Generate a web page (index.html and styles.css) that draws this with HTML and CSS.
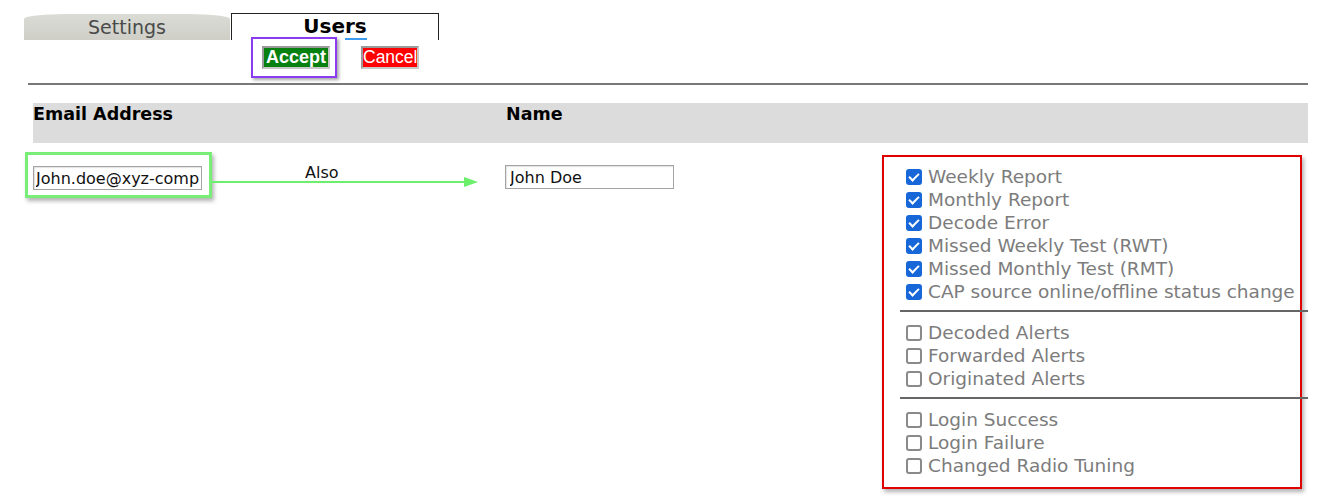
FILE: index.html
```html
<!DOCTYPE html>
<html lang="en">
<head>
<meta charset="utf-8">
<title>Users</title>
<link rel="stylesheet" href="styles.css">
</head>
<body>
<div class="tabs">
  <div class="tab tab-settings">Settings</div>
  <div class="tab tab-users">Use<span class="tab-mark">rs</span></div>
</div>
<div class="actions">
  <div class="accept-frame"><button class="btn btn-accept" type="button">Accept</button></div>
  <button class="btn btn-cancel" type="button">Cancel</button>
</div>
<div class="rule"></div>
<div class="head">
  <div class="head-email">Email Address</div>
  <div class="head-name">Name</div>
</div>
<div class="row">
  <div class="email-frame"><input class="field field-email" type="text" value="John.doe@xyz-comp"></div>
  <div class="link">
    <div class="link-label">Also</div>
    <svg class="link-arrow" width="266" height="10" viewBox="0 0 266 10">
      <line x1="0" y1="5" x2="256" y2="5" stroke="#6cf06c" stroke-width="2"/>
      <polygon points="252,0 266,5 252,10" fill="#6cf06c"/>
    </svg>
  </div>
  <input class="field field-name" type="text" value="John Doe">
  <div class="prefs">
    <label class="pref"><span class="box on"></span>Weekly Report</label>
    <label class="pref"><span class="box on"></span>Monthly Report</label>
    <label class="pref"><span class="box on"></span>Decode Error</label>
    <label class="pref"><span class="box on"></span>Missed Weekly Test (RWT)</label>
    <label class="pref"><span class="box on"></span>Missed Monthly Test (RMT)</label>
    <label class="pref"><span class="box on"></span>CAP source online/offline status change</label>
    <div class="sep"></div>
    <label class="pref"><span class="box"></span>Decoded Alerts</label>
    <label class="pref"><span class="box"></span>Forwarded Alerts</label>
    <label class="pref"><span class="box"></span>Originated Alerts</label>
    <div class="sep"></div>
    <label class="pref"><span class="box"></span>Login Success</label>
    <label class="pref"><span class="box"></span>Login Failure</label>
    <label class="pref"><span class="box"></span>Changed Radio Tuning</label>
  </div>
</div>
</body>
</html>
```

FILE: styles.css
```css
html, body {
  margin: 0;
  padding: 0;
  background: #ffffff;
}
body {
  font-family: "DejaVu Sans", "Liberation Sans", Arial, sans-serif;
  color: #000;
  width: 1320px;
  height: 499px;
  overflow: hidden;
}

/* tabs */
.tabs {
  display: flex;
  align-items: flex-end;
  padding: 13px 0 0 24px;
  height: 27px;
}
.tab {
  box-sizing: border-box;
  text-align: center;
}
.tab-settings {
  width: 206px;
  height: 26px;
  background: linear-gradient(#dcdcd6, #cfcfc8);
  border-radius: 40px 40px 0 0 / 5px 5px 0 0;
  color: #4a4a4a;
  font-size: 19px;
  line-height: 26px;
}
.tab-users {
  width: 208px;
  height: 27px;
  margin-left: 1px;
  border: 1px solid #222;
  border-bottom: none;
  background: #fff;
  font-weight: bold;
  font-size: 20px;
  line-height: 25px;
}
.tab-mark {
  border-bottom: 2px solid #3d9bf0;
}

/* accept / cancel */
.actions {
  display: flex;
  align-items: center;
  margin-top: -3px;
  padding-left: 251px;
  height: 41px;
  position: relative;
}
.accept-frame {
  box-sizing: border-box;
  width: 86px;
  height: 41px;
  border: 2px solid #8c3cf0;
  box-shadow: 2px 2px 3px rgba(0,0,0,0.35);
  display: flex;
  align-items: center;
  padding-left: 9px;
}
.btn {
  box-sizing: border-box;
  height: 23px;
  padding: 0;
  border: 2px solid #9a9a9a;
  border-right-color: #c8c8c8;
  border-bottom-color: #c8c8c8;
  color: #fff;
  font-family: "Liberation Sans", Arial, sans-serif;
  line-height: 19px;
}
.btn-accept {
  width: 68px;
  background: #06800e;
  font-weight: bold;
  font-size: 18px;
}
.btn-cancel {
  width: 58px;
  margin-left: 24px;
  background: #ff0000;
  font-size: 17.5px;
}

.rule {
  margin: 5px 0 0 28px;
  width: 1280px;
  height: 2px;
  background: #777;
}

/* header band */
.head {
  display: flex;
  margin: 18px 0 0 33px;
  width: 1275px;
  height: 40px;
  background: #dcdcdc;
  font-weight: bold;
  font-size: 17.5px;
  line-height: 20px;
  padding-top: 1px;
  box-sizing: border-box;
}
.head-email {
  width: 473px;
}

/* data row */
.row {
  display: flex;
  align-items: flex-start;
  margin-top: 9px;
  padding-left: 25px;
}
.email-frame {
  box-sizing: border-box;
  width: 187px;
  height: 46px;
  border: 3px solid #78ee78;
  box-shadow: 2px 3px 4px rgba(0,0,0,0.3);
  padding: 11px 0 0 5px;
}
.field {
  box-sizing: border-box;
  width: 169px;
  height: 24px;
  margin: 0;
  border: 1px solid #a5a5a5;
  box-shadow: inset 1px 1px 1px rgba(0,0,0,0.12);
  font-family: "DejaVu Sans", Verdana, sans-serif;
  font-size: 16px;
  color: #111;
  background: #fff;
  outline: none;
}
.field-email {
  padding: 0 0 0 2px;
}
.field-name {
  margin: 13px 0 0 27px;
  padding: 0 0 0 4px;
}

.link {
  width: 266px;
  height: 46px;
  display: flex;
  flex-direction: column;
}
.link-label {
  margin: 12px 0 0 93px;
  font-size: 16px;
  line-height: 18px;
  color: #111;
}
.link-arrow {
  display: block;
  margin-top: -5px;
}

/* preferences */
.prefs {
  box-sizing: border-box;
  width: 420px;
  margin: 3px 0 0 208px;
  border: 2px solid #e00000;
  box-shadow: 2px 3px 4px rgba(0,0,0,0.3);
  padding: 8px 0 10px 22px;
}
.pref {
  display: flex;
  align-items: center;
  height: 23px;
  font-size: 18.5px;
  line-height: 23px;
  color: #7c7c7c;
  white-space: nowrap;
}
.box {
  box-sizing: border-box;
  position: relative;
  flex: none;
  width: 16px;
  height: 16px;
  margin-right: 6px;
  border: 2px solid #8a8a8a;
  border-radius: 3px;
  background: #fff;
}
.box.on {
  border: none;
  background: #1767d8;
}
.box.on::after {
  content: "";
  position: absolute;
  left: 5px;
  top: 2px;
  width: 4px;
  height: 8px;
  border: solid #fff;
  border-width: 0 2.5px 2.5px 0;
  transform: rotate(45deg);
}
.sep {
  height: 2px;
  background: #666;
  margin: 7px -8px 9px -6px;
}
```
